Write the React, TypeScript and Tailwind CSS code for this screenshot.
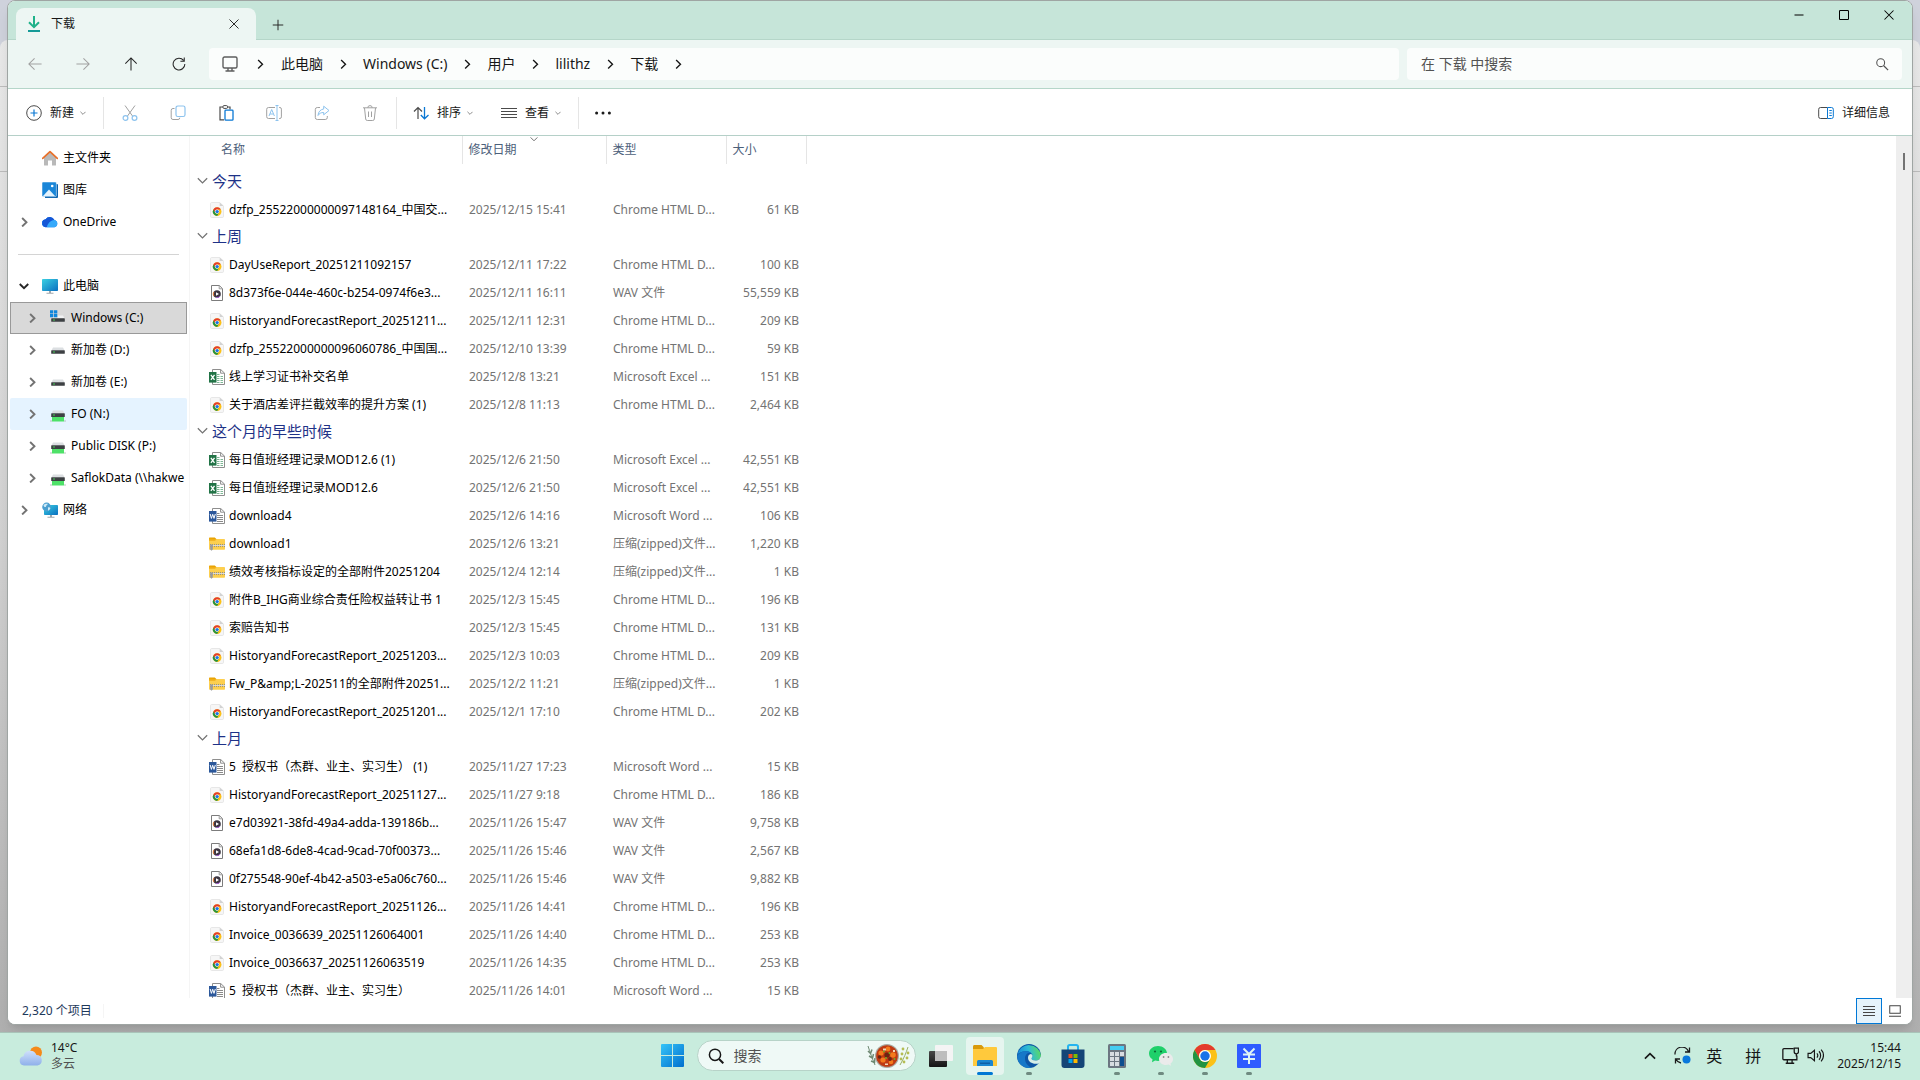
import { Fragment, type ReactNode } from "react";

type FileKind = "chrome" | "wav" | "excel" | "word" | "zip";

type FileRow = {
  kind: FileKind;
  name: string;
  date: string;
  size: string;
};

const typeLabels: Record<FileKind, string> = {
  chrome: "Chrome HTML D...",
  wav: "WAV 文件",
  excel: "Microsoft Excel ...",
  word: "Microsoft Word ...",
  zip: "压缩(zipped)文件...",
};

const groups: { title: string; files: FileRow[] }[] = [
  {
    title: "今天",
    files: [
      { kind: "chrome", name: "dzfp_25522000000097148164_中国交...", date: "2025/12/15 15:41", size: "61 KB" },
    ],
  },
  {
    title: "上周",
    files: [
      { kind: "chrome", name: "DayUseReport_20251211092157", date: "2025/12/11 17:22", size: "100 KB" },
      { kind: "wav", name: "8d373f6e-044e-460c-b254-0974f6e3...", date: "2025/12/11 16:11", size: "55,559 KB" },
      { kind: "chrome", name: "HistoryandForecastReport_20251211...", date: "2025/12/11 12:31", size: "209 KB" },
      { kind: "chrome", name: "dzfp_25522000000096060786_中国国...", date: "2025/12/10 13:39", size: "59 KB" },
      { kind: "excel", name: "线上学习证书补交名单", date: "2025/12/8 13:21", size: "151 KB" },
      { kind: "chrome", name: "关于酒店差评拦截效率的提升方案 (1)", date: "2025/12/8 11:13", size: "2,464 KB" },
    ],
  },
  {
    title: "这个月的早些时候",
    files: [
      { kind: "excel", name: "每日值班经理记录MOD12.6 (1)", date: "2025/12/6 21:50", size: "42,551 KB" },
      { kind: "excel", name: "每日值班经理记录MOD12.6", date: "2025/12/6 21:50", size: "42,551 KB" },
      { kind: "word", name: "download4", date: "2025/12/6 14:16", size: "106 KB" },
      { kind: "zip", name: "download1", date: "2025/12/6 13:21", size: "1,220 KB" },
      { kind: "zip", name: "绩效考核指标设定的全部附件20251204", date: "2025/12/4 12:14", size: "1 KB" },
      { kind: "chrome", name: "附件B_IHG商业综合责任险权益转让书 1", date: "2025/12/3 15:45", size: "196 KB" },
      { kind: "chrome", name: "索赔告知书", date: "2025/12/3 15:45", size: "131 KB" },
      { kind: "chrome", name: "HistoryandForecastReport_20251203...", date: "2025/12/3 10:03", size: "209 KB" },
      { kind: "zip", name: "Fw_P&amp;L-202511的全部附件20251...", date: "2025/12/2 11:21", size: "1 KB" },
      { kind: "chrome", name: "HistoryandForecastReport_20251201...", date: "2025/12/1 17:10", size: "202 KB" },
    ],
  },
  {
    title: "上月",
    files: [
      { kind: "word", name: "5  授权书（杰群、业主、实习生） (1)", date: "2025/11/27 17:23", size: "15 KB" },
      { kind: "chrome", name: "HistoryandForecastReport_20251127...", date: "2025/11/27 9:18", size: "186 KB" },
      { kind: "wav", name: "e7d03921-38fd-49a4-adda-139186b...", date: "2025/11/26 15:47", size: "9,758 KB" },
      { kind: "wav", name: "68efa1d8-6de8-4cad-9cad-70f00373...", date: "2025/11/26 15:46", size: "2,567 KB" },
      { kind: "wav", name: "0f275548-90ef-4b42-a503-e5a06c760...", date: "2025/11/26 15:46", size: "9,882 KB" },
      { kind: "chrome", name: "HistoryandForecastReport_20251126...", date: "2025/11/26 14:41", size: "196 KB" },
      { kind: "chrome", name: "Invoice_0036639_20251126064001", date: "2025/11/26 14:40", size: "253 KB" },
      { kind: "chrome", name: "Invoice_0036637_20251126063519", date: "2025/11/26 14:35", size: "253 KB" },
      { kind: "word", name: "5  授权书（杰群、业主、实习生）", date: "2025/11/26 14:01", size: "15 KB" },
    ],
  },
];

const crumbs = ["此电脑", "Windows (C:)", "用户", "lilithz", "下载"];

/* ---------- small line icons ---------- */

type ChevronProps = { dir: "right" | "down" | "up"; className?: string; width?: number };

function Chevron({ dir, className = "size-2", width = 1.1 }: ChevronProps) {
  const d = {
    right: "M2.5 .8 6 4.2 2.5 7.6",
    down: "M.6 2.4 4 5.8 7.4 2.4",
    up: "M.6 5.8 4 2.4 7.4 5.8",
  }[dir];
  return (
    <svg viewBox="0 0 8 8" className={`shrink-0 ${className}`} fill="none" stroke="currentColor" strokeWidth={width}>
      <path d={d} />
    </svg>
  );
}

function Line({ children, className = "size-4" }: { children: ReactNode; className?: string }) {
  return (
    <svg viewBox="0 0 16 16" className={`shrink-0 ${className}`} fill="none" stroke="currentColor" strokeWidth="1">
      {children}
    </svg>
  );
}

function ChromeMark() {
  return (
    <>
      <circle cx="12" cy="12" r="12" fill="#fbc116" />
      <path d="M1.6 6A12 12 0 0 1 22.4 6H12a6 6 0 0 0-5.2 9z" fill="#e33b2e" />
      <path d="M1.6 6A12 12 0 0 0 12 24l5.2-9A6 6 0 0 1 6.8 15z" fill="#229342" />
      <circle cx="12" cy="12" r="6" fill="#fff" />
      <circle cx="12" cy="12" r="4.7" fill="#1a73e8" />
    </>
  );
}

function FileIcon({ kind }: { kind: FileKind }) {
  if (kind === "chrome") {
    return (
      <svg viewBox="0 0 16 16" className="size-4 shrink-0">
        <path d="M2.5.5h8.2l3.8 3.6v10.2a1.2 1.2 0 0 1-1.2 1.2H2.7a1.2 1.2 0 0 1-1.2-1.2V1.7A1.2 1.2 0 0 1 2.5.5z" fill="#f6f6f6" stroke="#e2e2e2" strokeWidth=".8" />
        <path d="M10.7.5v3.6h3.8z" fill="#d2d2d2" />
        <g transform="translate(3.8 5.3) scale(.36)">
          <ChromeMark />
        </g>
      </svg>
    );
  }
  if (kind === "wav") {
    return (
      <svg viewBox="0 0 16 16" className="size-4 shrink-0">
        <path d="M2.5.5h7.8l3.2 3.2v11.8h-11z" fill="#fff" stroke="#7c7c7c" />
        <path d="M10.2.5v3.3h3.3" fill="none" stroke="#9a9a9a" />
        <circle cx="8" cy="9" r="3.8" fill="#3b3440" />
        <path d="M5 6.8a3.6 3.6 0 0 0 0 4.4" stroke="#e8833c" fill="none" />
        <path d="M11 11A3.8 3.8 0 0 1 7 12.6" stroke="#a05bd0" fill="none" />
        <path d="m7 7.2 3 1.8-3 1.8z" fill="#fff" />
      </svg>
    );
  }
  if (kind === "zip") {
    return (
      <svg viewBox="0 0 16 16" className="size-4 shrink-0">
        <path d="M0 2.4C0 1.8.4 1.4 1 1.4h4.8L7.4 3H0z" fill="#e8a200" />
        <path d="M0 3h15.2c.5 0 .8.3.8.8V13c0 .5-.3.8-.8.8H.8A.8.8 0 0 1 0 13z" fill="#fdcf4f" />
        <path d="M0 2.4v2.4h6l1.6-1.6z" fill="#f0ad14" />
        <path d="M1 8.6h15M1 10.4h15" stroke="#8b8b8b" strokeDasharray="1 1" />
        <path d="M1 9.5h15" stroke="#d9d9d9" />
        <path d="M1.2 8.4h2.6v5.2l-1.3 1.2-1.3-1.2z" fill="#9b9b9b" />
      </svg>
    );
  }
  const word = kind === "word";
  return (
    <svg viewBox="0 0 16 16" className="size-4 shrink-0">
      <path d="M3.5.5h8.2l3.8 3.6v11.4h-12z" fill="#fff" stroke="#8e8e8e" />
      <path d="M11.6.5v3.7h3.9" fill="none" stroke="#8e8e8e" />
      {word ? (
        <path d="M8 5.5h2.5M8 7.5h6M8 9.5h6M8 11.5h6M8 13.5h6" stroke="#8a8a8a" />
      ) : (
        <path d="M8 5.5h2.5M8 7.5h6M8 9.5h6M8 11.5h6M8 13.5h6" stroke="#7db795" strokeDasharray="2.5 1" />
      )}
      <path d="M0 3h7.5v10.6H0z" fill={word ? "#2b579a" : "#217346"} />
      {word ? (
        <path d="m1.2 6 1.2 4.4L3.7 6.3 5 10.4 6.3 6" fill="none" stroke="#fff" />
      ) : (
        <path d="m1.9 5.8 3.6 5M5.5 5.8l-3.6 5" fill="none" stroke="#fff" strokeWidth="1.3" />
      )}
    </svg>
  );
}

/* ---------- navigation pane ---------- */

function HomeIcon() {
  return (
    <svg viewBox="0 0 16 16" className="size-4 shrink-0">
      <path d="M2 7.2 8 1.8l6 5.4V15a.6.6 0 0 1-.6.6H10V10.4H6v5.2H2.6A.6.6 0 0 1 2 15z" fill="#b9b9b9" />
      <path d="M.7 8.4 8 1.6l7.3 6.8" fill="none" stroke="#e8702a" strokeWidth="1.7" strokeLinecap="round" strokeLinejoin="round" />
    </svg>
  );
}

function GalleryIcon() {
  return (
    <svg viewBox="0 0 16 16" className="size-4 shrink-0">
      <path d="M3 2h12a1 1 0 0 1 1 1v12a1 1 0 0 1-1 1H3z" fill="#0b62ad" />
      <rect width="14.4" height="14.6" rx="1" fill="#1a86d8" stroke="#fff" strokeWidth=".5" />
      <path d="m1 14 6-6.6L13 14z" fill="#e4f3fd" />
      <circle cx="10.2" cy="4" r="1.3" fill="#fff" />
    </svg>
  );
}

function CloudIcon() {
  return (
    <svg viewBox="0 0 16 16" className="size-4 shrink-0">
      <path d="M4 13.2a4 4 0 0 1-.4-8A5 5 0 0 1 12.4 6a3.7 3.7 0 0 1 .1 7.2z" fill="#1a7df0" />
      <path d="M3.6 5.2A5 5 0 0 1 12.4 6C9.6 6 7 8 4.8 13.1A4 4 0 0 1 3.6 5.2z" fill="#1557d6" />
      <path d="M5 13.2c.6-3.6 3.6-7 7.4-7.2a3.7 3.7 0 0 1 .1 7.2z" fill="#36a9fa" />
    </svg>
  );
}

function PcIcon() {
  return (
    <svg viewBox="0 0 16 16" className="size-4 shrink-0">
      <defs>
        <linearGradient id="screen" x1="0" y1="0" x2="1" y2="1">
          <stop offset="0" stopColor="#3ad0e2" />
          <stop offset="1" stopColor="#0b6fc0" />
        </linearGradient>
      </defs>
      <rect y="1" width="16" height="12" rx=".8" fill="url(#screen)" />
      <path d="M7 13h2v2H7zM4.500 14.800h7v.9h-7z" fill="#9ea7ad" />
    </svg>
  );
}

function NetworkIcon() {
  return (
    <svg viewBox="0 0 16 16" className="size-4 shrink-0">
      <rect x="2" y="3" width="14" height="10" rx=".8" fill="url(#screen)" />
      <path d="M8 13h2v2H8zM5.500 14.800h7v.9h-7z" fill="#9ea7ad" />
      <circle cx="4.6" cy="5" r="4.4" fill="#4b9fd0" />
      <path d="M1.5 3.2c1.5-2 3.4-1.6 4.4-1.4-.4 1.4-1.6 1.2-1.8 2.4S2.2 5.6 1.5 3.2zM6 5.6c1.2-.6 2 0 2.4.6-.6 1.6-1.6 2.2-2.4 2.4z" fill="#cfeaf6" />
    </svg>
  );
}

function NetworkDriveIcon() {
  return (
    <svg viewBox="0 0 16 16" className="size-4 shrink-0">
      <path d="M2 10h12v5.500H2z" fill="#4ee168" />
      <path d="M0 15h2M14 15h2" stroke="#a9b3ad" strokeWidth=".8" />
      <path d="M3 4.400h10l1.600 3.200H1.400z" fill="#dcdfe2" />
      <rect x="1.200" y="7.200" width="13.600" height="3.800" rx=".6" fill="#3d4043" />
      <circle cx="4" cy="9" r=".8" fill="#44e05a" />
    </svg>
  );
}

function DriveIcon({ system }: { system?: boolean }) {
  return (
    <svg viewBox="0 0 16 16" className="size-4 shrink-0">
      <path d="M3 5.400h10l1.600 3.200H1.400z" fill={system ? "#f1f2f3" : "#dcdfe2"} />
      <rect x="1.200" y="8.200" width="13.600" height="3.600" rx=".6" fill="#3d4043" />
      <circle cx="4" cy="10" r=".8" fill="#44e05a" />
      {system && (
        <>
          <path d="M0 0h7.600v7.600H0z" fill="#d9d9d9" />
          <path d="M0 .2h3.300v3.200H0zM4 .2h3.300v3.200H4zM0 4.100h3.300v3.200H0zM4 4.100h3.300v3.200H4z" fill="#0f86dc" />
        </>
      )}
    </svg>
  );
}

type NavItemProps = {
  icon: ReactNode;
  label: string;
  expand?: "right" | "down";
  nested?: boolean;
  className?: string;
};

function NavItem({ icon, label, expand, nested, className = "" }: NavItemProps) {
  return (
    <li>
      <button
        type="button"
        className={`flex h-8 w-full items-center overflow-hidden text-xs whitespace-nowrap text-black ${nested ? "pl-[17px]" : "pl-[9px]"} ${className}`}
      >
        <span className="mr-[7px] flex w-4 shrink-0">
          {expand && (
            <Chevron
              dir={expand}
              width={1.5}
              className={expand === "down" ? "size-2.5 text-neutral-800" : "size-2.5 text-neutral-500"}
            />
          )}
        </span>
        {icon}
        <span className="ml-[5px]">{label}</span>
      </button>
    </li>
  );
}

function Sidebar() {
  return (
    <nav aria-label="导航窗格" className="w-[182px] shrink-0 overflow-hidden border-r border-neutral-100 px-0.5 py-1.5">
      <ul>
        <NavItem icon={<HomeIcon />} label="主文件夹" />
        <NavItem icon={<GalleryIcon />} label="图库" />
        <NavItem icon={<CloudIcon />} label="OneDrive" expand="right" />
      </ul>
      <div className="flex h-8 items-center px-2">
        <hr className="w-full border-neutral-300" />
      </div>
      <ul>
        <NavItem icon={<PcIcon />} label="此电脑" expand="down" />
        <NavItem
          icon={<DriveIcon system />}
          label="Windows (C:)"
          expand="right"
          nested
          className="bg-[#d9d9d9] outline -outline-offset-1 outline-[#999999]"
        />
        <NavItem icon={<DriveIcon />} label="新加卷 (D:)" expand="right" nested />
        <NavItem icon={<DriveIcon />} label="新加卷 (E:)" expand="right" nested />
        <NavItem icon={<NetworkDriveIcon />} label="FO (N:)" expand="right" nested className="rounded-xs bg-[#e5f3ff]" />
        <NavItem icon={<NetworkDriveIcon />} label="Public DISK (P:)" expand="right" nested />
        <NavItem icon={<NetworkDriveIcon />} label="SaflokData (\\hakwe" expand="right" nested />
        <NavItem icon={<NetworkIcon />} label="网络" expand="right" />
      </ul>
    </nav>
  );
}

/* ---------- window chrome ---------- */

function TitleBar() {
  return (
    <div className="flex h-[39px] shrink-0 items-end border-b border-[#b5d6c9] bg-[#c6e5d9]">
      {/* tab */}
      <div className="-mb-px ml-2 flex h-8 w-60 items-center rounded-t-lg bg-[#edf6f3] pr-2.5 pl-[11px]">
        <svg viewBox="0 0 14 16" className="h-4 w-3.5" fill="none" strokeWidth="2">
          <path d="M7 0v11M2 6.200l5 5 5-5" stroke="#1fb28a" />
          <path d="M1 15h12" stroke="#159a97" />
        </svg>
        <span className="ml-2.5 grow text-xs text-neutral-900">下载</span>
        <button type="button" aria-label="关闭标签页" className="flex size-6 items-center justify-center text-neutral-800">
          <Line className="size-3">
            <path d="m2 2 12 12M14 2 2 14" strokeWidth="1.3" />
          </Line>
        </button>
      </div>
      <button type="button" aria-label="新标签页" className="mb-[2px] ml-2.5 flex size-6 items-center justify-center text-neutral-800">
        <Line className="size-3">
          <path d="M8 1v14M1 8h14" strokeWidth="1.3" />
        </Line>
      </button>
      <div className="ml-auto flex h-full items-start pr-px text-black">
        <button type="button" aria-label="最小化" className="flex h-7 w-[45px] items-center justify-center">
          <Line className="size-3">
            <path d="M2 8h12" strokeWidth="1.4" />
          </Line>
        </button>
        <button type="button" aria-label="最大化" className="flex h-7 w-[45px] items-center justify-center">
          <Line className="size-3">
            <rect x="2" y="2" width="12" height="12" rx="1" strokeWidth="1.4" />
          </Line>
        </button>
        <button type="button" aria-label="关闭" className="flex h-7 w-[45px] items-center justify-center">
          <Line className="size-3">
            <path d="m2 2 12 12M14 2 2 14" strokeWidth="1.4" />
          </Line>
        </button>
      </div>
    </div>
  );
}

function NavButton({ label, muted, children }: { label: string; muted?: boolean; children: ReactNode }) {
  return (
    <button
      type="button"
      aria-label={label}
      className={`flex size-8 items-center justify-center ${muted ? "text-neutral-400" : "text-neutral-800"}`}
    >
      <Line className="size-3.5">{children}</Line>
    </button>
  );
}

function AddressRow() {
  return (
    <div className="flex h-[49px] shrink-0 items-center border-b border-[#b5d6c9] bg-[#edf6f3] pr-2.5 pl-[11px]">
      <div className="mr-3.5 flex gap-4">
        <NavButton label="后退" muted>
          <path d="M15.500 8H1M7.500 1.500 1 8l6.500 6.500" strokeWidth="1.200" />
        </NavButton>
        <NavButton label="前进" muted>
          <path d="M.5 8H15M8.500 1.500 15 8l-6.500 6.500" strokeWidth="1.200" />
        </NavButton>
        <NavButton label="上移">
          <path d="M8 15.500V1M1.500 7.500 8 1l6.500 6.500" strokeWidth="1.200" />
        </NavButton>
        <NavButton label="刷新">
          <path d="M13.200 3.800A6.700 6.700 0 1 0 14.700 8M14 .5v4.300H9.600" strokeWidth="1.200" />
        </NavButton>
      </div>
      {/* breadcrumb */}
      <div className="flex h-8 grow items-center rounded-sm bg-[#fbfdfc] pl-3 text-sm text-neutral-900">
        <svg viewBox="0 0 18 16" className="h-4 w-[18px]" fill="none" stroke="#5d5d5d" strokeWidth="1.4">
          <rect x="2" y="1" width="14" height="11" rx="1.500" />
          <path d="M7 12v2.500M11 12v2.500M4.500 15h9" />
        </svg>
        <Chevron dir="right" className="mx-4 size-2.5" />
        {crumbs.map((crumb) => (
          <Fragment key={crumb}>
            <button type="button">{crumb}</button>
            <Chevron dir="right" className="mx-[15px] size-2.5" />
          </Fragment>
        ))}
      </div>
      {/* search */}
      <label className="ml-2 flex h-8 w-[495px] items-center rounded-sm bg-[#fbfdfc] pr-[13px] pl-3.5">
        <input
          type="text"
          aria-label="在 下载 中搜索"
          placeholder="在 下载 中搜索"
          className="grow bg-transparent text-sm text-neutral-900 outline-none placeholder:text-neutral-600"
        />
        <Line className="size-3.5 text-neutral-600">
          <circle cx="6.500" cy="6.500" r="4.500" strokeWidth="1.200" />
          <path d="m10 10 5 5" strokeWidth="1.400" />
        </Line>
      </label>
    </div>
  );
}

function ToolButton({ label, children }: { label: string; children: ReactNode }) {
  return (
    <button type="button" aria-label={label} className="flex size-8 items-center justify-center text-neutral-400">
      <Line>{children}</Line>
    </button>
  );
}

function Divider() {
  return <div className="h-8 w-px bg-neutral-200" />;
}

function CommandBar() {
  return (
    <div className="flex h-[47px] shrink-0 items-center border-b border-[#b5d0c8] bg-white pt-0.5 pr-[22px] pl-[18px] text-xs text-neutral-900">
      <button type="button" className="mr-[17px] flex items-center gap-2">
        <Line>
          <circle cx="8" cy="8" r="7.300" stroke="#4a4a4a" />
          <path d="M8 4.500v7M4.500 8h7" stroke="#0a78d4" strokeWidth="1.200" />
        </Line>
        新建
        <Chevron dir="down" className="-ml-0.5 size-1.5 text-neutral-500" />
      </button>
      <Divider />
      <div className="mx-2.5 flex gap-4">
        <ToolButton label="剪切">
          <path d="m3 .5 7.500 10.500M13 .5 5.500 11" />
          <circle cx="3.500" cy="13" r="2.400" stroke="#8dc3ee" strokeWidth="1.200" />
          <circle cx="12.500" cy="13" r="2.400" stroke="#8dc3ee" strokeWidth="1.200" />
        </ToolButton>
        <ToolButton label="复制">
          <path d="M4.500 3.500H3a1.800 1.800 0 0 0-1.800 1.800v7.400A1.800 1.800 0 0 0 3 14.500h5a1.800 1.800 0 0 0 1.800-1.800" />
          <rect x="6" y="1" width="9" height="10.500" rx="1.800" stroke="#8dc3ee" strokeWidth="1.200" />
        </ToolButton>
        <ToolButton label="粘贴">
          <path d="M6 14.800H2V2h3M9 2h3v2.500" stroke="#4a4a4a" strokeWidth="1.200" />
          <rect x="5" y=".6" width="4.500" height="2.800" rx="1" stroke="#4a4a4a" />
          <rect x="7" y="5.200" width="8" height="10" rx=".8" stroke="#0a78d4" strokeWidth="1.300" />
        </ToolButton>
        <ToolButton label="重命名">
          <path d="M9 2.500H2.500A1.800 1.800 0 0 0 .7 4.300v7.400a1.800 1.800 0 0 0 1.800 1.800H9M13 2.500h.8a1.600 1.600 0 0 1 1.600 1.600v7.800a1.600 1.600 0 0 1-1.600 1.600H13" />
          <path d="M11 .5v15M9.500.5h3M9.500 15.500h3M3 11l2.700-6.500L8.400 11M4 9h3.400" stroke="#8dc3ee" />
        </ToolButton>
        <ToolButton label="共享">
          <path d="M6 2.500H3.300A2 2 0 0 0 1.300 4.500v8a2 2 0 0 0 2 2h8a2 2 0 0 0 2-2v-1.500" />
          <path d="M9.700 1.200 15 5.500l-5.300 4.300V7.500C7 7.400 5.200 8.500 4 10.500c.3-3.700 2.300-6 5.700-6.500z" stroke="#8dc3ee" />
        </ToolButton>
        <ToolButton label="删除">
          <path d="M1 2.800h14M5.800 2.800a2.200 2.200 0 0 1 4.400 0M2.500 3l1.200 11a1.600 1.600 0 0 0 1.600 1.500h5.400a1.600 1.600 0 0 0 1.600-1.500l1.200-11M6.500 6.500v5.500M9.500 6.500v5.500" />
        </ToolButton>
      </div>
      <Divider />
      <button type="button" className="ml-4 flex items-center gap-2">
        <Line>
          <path d="M5 14V2.500M1 6.500l4-4 4 4" stroke="#4a4a4a" strokeWidth="1.200" />
          <path d="M11.500 2v11.500M7.800 10l3.700 3.800 4-3.800" stroke="#0a78d4" strokeWidth="1.300" />
        </Line>
        排序
        <Chevron dir="down" className="-ml-0.5 size-1.5 text-neutral-500" />
      </button>
      <button type="button" className="mr-[17px] ml-7 flex items-center gap-2">
        <Line>
          <path d="M0 3.500h16M0 6.500h16M0 9.500h16M0 12.500h16" stroke="#4a4a4a" />
        </Line>
        查看
        <Chevron dir="down" className="-ml-0.5 size-1.5 text-neutral-500" />
      </button>
      <Divider />
      <button type="button" aria-label="更多" className="ml-2 flex size-8 items-center justify-center">
        <svg viewBox="0 0 16 4" className="h-1 w-4" fill="#1a1a1a">
          <circle cx="1.600" cy="2" r="1.500" />
          <circle cx="8" cy="2" r="1.500" />
          <circle cx="14.400" cy="2" r="1.500" />
        </svg>
      </button>
      <button type="button" className="ml-auto flex items-center gap-2">
        <Line>
          <path d="M9.500 2.500H2.500A1.800 1.800 0 0 0 .7 4.300v7.400a1.800 1.800 0 0 0 1.800 1.800h7" stroke="#4a4a4a" />
          <path d="M9.500 2.500h4a1.800 1.800 0 0 1 1.800 1.800v7.400a1.800 1.800 0 0 1-1.800 1.800h-4zM11.300 5.500h2.500M11.300 8h2.500M11.300 10.500h2.500" stroke="#0a78d4" />
        </Line>
        详细信息
      </button>
    </div>
  );
}

function FileTable() {
  return (
    <div className="relative min-w-0 grow overflow-hidden">
      <Chevron dir="down" className="absolute -top-px left-[340px] size-2 text-neutral-500" width={1} />
      <table className="w-[616px] table-fixed border-collapse text-xs whitespace-nowrap text-neutral-500">
        <colgroup>
          <col className="w-[272px]" />
          <col className="w-36" />
          <col className="w-[120px]" />
          <col className="w-20" />
        </colgroup>
        <thead>
          <tr className="h-7 text-left text-[#4c607a]">
            <th scope="col" className="border-r border-neutral-200 pl-[31px] font-normal">名称</th>
            <th scope="col" className="border-r border-neutral-200 pl-1.5 font-normal">修改日期</th>
            <th scope="col" className="border-r border-neutral-200 pl-1.5 font-normal">类型</th>
            <th scope="col" className="border-r border-neutral-200 pl-1.5 font-normal">大小</th>
          </tr>
          <tr className="h-[5px]" />
        </thead>
        {groups.map((group) => (
          <tbody key={group.title}>
            <tr className="h-[27px]">
              <th colSpan={4} scope="rowgroup" className="p-0 pb-1 pl-[7px] text-left font-normal">
                <button type="button" className="flex items-center gap-1 text-[15px] leading-5 text-[#1e3287]">
                  <Chevron dir="down" className="size-[11px] text-neutral-500" width={0.9} />
                  {group.title}
                </button>
              </th>
            </tr>
            {group.files.map((file) => (
              <tr key={file.name} className="h-7">
                <td className="p-0 pl-[19px]">
                  <div className="flex items-center gap-1 whitespace-pre text-black">
                    <FileIcon kind={file.kind} />
                    {file.name}
                  </div>
                </td>
                <td className="p-0 pl-[7px]">{file.date}</td>
                <td className="p-0 pl-[7px]">{typeLabels[file.kind]}</td>
                <td className="p-0 pr-[7px] text-right">{file.size}</td>
              </tr>
            ))}
          </tbody>
        ))}
      </table>
    </div>
  );
}

function StatusBar() {
  return (
    <div className="flex h-[26px] shrink-0 items-center bg-white pr-[11px] pl-3.5 text-xs text-[#1e395b]">
      <span className="w-[81px]">2,320 个项目</span>
      <div className="h-3.5 w-px bg-neutral-100" />
      <button
        type="button"
        aria-label="详细信息视图"
        className="ml-auto flex size-[26px] items-center justify-center border border-[#0078d7] bg-[#e5f3fb] text-neutral-700"
      >
        <Line className="size-3">
          <path d="M0 2h16M0 6h16M0 10h16M0 14h16" strokeWidth="1.300" />
        </Line>
      </button>
      <button type="button" aria-label="大缩略图视图" className="ml-[7px] flex items-center justify-center text-neutral-700">
        <Line className="size-3">
          <rect x="1" y="1" width="14" height="10" strokeWidth="1.300" />
          <path d="M0 15h16" strokeWidth="1.300" />
        </Line>
      </button>
    </div>
  );
}

/* ---------- taskbar ---------- */

function TaskApp({ label, state, children }: { label: string; state?: "running" | "active"; children: ReactNode }) {
  return (
    <button
      type="button"
      aria-label={label}
      className={`relative flex h-[38px] w-[38px] items-center justify-center rounded-sm ${state === "active" ? "bg-[#e6f5ef]" : ""}`}
    >
      <svg viewBox="0 0 24 24" className="size-6">
        {children}
      </svg>
      {state === "running" && <span className="absolute bottom-0 h-[3px] w-1.5 rounded-full bg-[#6f8a80]" />}
      {state === "active" && <span className="absolute bottom-0 h-[3px] w-4 rounded-full bg-[#0078d4]" />}
    </button>
  );
}

function FoodArt() {
  return (
    <svg viewBox="0 0 44 24" className="h-6 w-11 shrink-0">
      <path d="M2 2c2 6 4 12 7 19" stroke="#6f8a73" fill="none" />
      <path d="m2 7 2.500 2.500L6 5.500M3 12l3.500 2 1-4M5 17l3.500 1.500L9 14" stroke="#6f8a73" strokeWidth="1.500" fill="none" />
      <circle cx="21" cy="12" r="12" fill="#a9aaa2" />
      <circle cx="21" cy="12" r="10.800" fill="#bf3a12" />
      <g fill="#f47a1c">
        <circle cx="15" cy="9" r="2.600" />
        <circle cx="22" cy="5" r="2.400" />
        <circle cx="27" cy="11" r="2.800" />
        <circle cx="17" cy="16" r="2.600" />
        <circle cx="25" cy="18" r="2.300" />
      </g>
      <g fill="#6b2413">
        <circle cx="21" cy="11" r="2.600" />
        <circle cx="24" cy="15" r="1.900" />
        <circle cx="13.500" cy="13" r="1.800" />
      </g>
      <path d="M17 4.500h3v2h-3zM27 6h2v2h-2zM19 19.500h3v1.500h-3z" fill="#f2d6b8" />
      <g fill="#6fae2b">
        <circle cx="18" cy="7.500" r="1" />
        <circle cx="23.500" cy="9" r="1" />
        <circle cx="20" cy="14" r="1" />
        <circle cx="28.500" cy="15" r="1" />
      </g>
      <path d="M42 3c-2 6-4 11-8 18" stroke="#9ab06a" fill="none" />
      <g fill="#b5bd52">
        <circle cx="37" cy="5" r="1.400" />
        <circle cx="42" cy="9" r="1.400" />
        <circle cx="36" cy="10" r="1.400" />
        <circle cx="41" cy="14" r="1.400" />
        <circle cx="35" cy="15" r="1.400" />
        <circle cx="38" cy="18" r="1.400" />
      </g>
    </svg>
  );
}

function Taskbar() {
  return (
    <footer className="relative grid h-12 shrink-0 grid-cols-[1fr_auto_1fr] items-center border-t border-[#a9c4b9] bg-[#c8ecdd] pb-0.5 text-xs text-neutral-900">
      {/* weather */}
      <button type="button" className="ml-[19px] flex items-center gap-2 justify-self-start text-left">
        <svg viewBox="0 0 24 20" className="h-5 w-6">
          <defs>
            <linearGradient id="cloud" x1="0" y1="0" x2="0" y2="1">
              <stop offset="0" stopColor="#cfe0fb" />
              <stop offset="1" stopColor="#8fb0ea" />
            </linearGradient>
          </defs>
          <circle cx="17" cy="6.500" r="6" fill="#f58a1a" />
          <path d="M5 19.500a4.700 4.700 0 0 1-.5-9.300A6.800 6.800 0 0 1 17.500 9a5.300 5.300 0 0 1 1 10.500z" fill="url(#cloud)" />
        </svg>
        <span>
          <span className="block leading-4">14°C</span>
          <span className="block leading-4 text-neutral-600">多云</span>
        </span>
      </button>

      {/* pinned apps */}
      <div className="flex items-center gap-1.5 pl-2">
        <button type="button" aria-label="开始" className="mr-[7px] flex h-[38px] items-center">
          <svg viewBox="0 0 23 23" className="size-[23px]">
            <defs>
              <linearGradient id="start" x1="0" y1="0" x2="1" y2="1">
                <stop offset="0" stopColor="#35c4f8" />
                <stop offset="1" stopColor="#006fce" />
              </linearGradient>
            </defs>
            <path d="M1 0h10v11H0V1a1 1 0 0 1 1-1zM12 0h10a1 1 0 0 1 1 1v10H12zM0 12h11v11H1a1 1 0 0 1-1-1zM12 12h11v10a1 1 0 0 1-1 1H12z" fill="url(#start)" />
          </svg>
        </button>
        <label className="flex h-[31px] w-[219px] items-center rounded-full border border-[#b7d3c8] bg-[#eff9f6] pr-[5px] pl-2.5">
          <Line>
            <circle cx="7" cy="6.800" r="5.600" strokeWidth="1.500" />
            <path d="m11 11 4.300 4.300" strokeWidth="2" />
          </Line>
          <input
            type="text"
            aria-label="搜索"
            placeholder="搜索"
            className="ml-2.5 min-w-0 grow bg-transparent text-sm outline-none placeholder:text-neutral-600"
          />
          <FoodArt />
        </label>
        <TaskApp label="任务视图">
          <defs>
            <linearGradient id="view" x1="0" y1="0" x2="0" y2="1">
              <stop offset="0" stopColor="#484848" />
              <stop offset="1" stopColor="#141414" />
            </linearGradient>
          </defs>
          <rect y="7" width="18" height="16" rx="1" fill="url(#view)" />
          <rect x="6" y="1" width="18" height="16" rx="1" fill="#f4f4f4" />
          <path d="M6 7h12v10H6z" fill="#bdbdbd" />
        </TaskApp>
        <TaskApp label="文件资源管理器" state="active">
          <path d="M0 2.500C0 1.700.6 1 1.500 1h7L11 3.500V8H0z" fill="#d99a0b" />
          <path d="M0 5h10l2-2h11a1 1 0 0 1 1 1v18H0z" fill="#ffc93c" />
          <path d="M4 22v-4.500a1.500 1.500 0 0 1 1.500-1.500h13a1.500 1.500 0 0 1 1.500 1.500V22z" fill="#1a86d0" />
          <path d="M7 18.500h10v1.500H7z" fill="#0d5fa6" />
        </TaskApp>
        <TaskApp label="Edge" state="running">
          <defs>
            <linearGradient id="edge" x1="0" y1=".5" x2="1" y2=".3">
              <stop offset="0" stopColor="#1688d8" />
              <stop offset=".5" stopColor="#2fbcd4" />
              <stop offset="1" stopColor="#5fdc58" />
            </linearGradient>
          </defs>
          <circle cx="12" cy="12" r="12" fill="#0d56a6" />
          <path d="M.3 11A12 12 0 0 1 24 11.500c0 3-2.500 5-5.500 5-2.500 0-4-1-4-2 0-.8 1-1 1-2.800C15.500 9 12.500 7.200 9 7.200 4.500 7.200 1.500 9 .3 11z" fill="url(#edge)" />
          <path d="M.1 12.500C1.500 9.300 5 7.300 9 7.300c2 0 3.500.5 4.600 1.300C10 8.800 8 11.300 8 14.500c0 4 2.500 7.500 6.500 9.200A12 12 0 0 1 .1 12.500z" fill="#1678c8" />
          <path d="M13.800 10c-1.800.4-2.800 2-2.800 3.800 0 3.700 3.700 6 7.500 6 1.500 0 3-.4 4-.9L24 16v-4l-1.500 3.200c-1.200.9-2.500 1.300-4 1.300-2.500 0-4-1-4-2 0-.8 1-1 1-2.800 0-.8-.6-1.400-1.700-1.700z" fill="#d5eee8" />
        </TaskApp>
        <TaskApp label="应用商店">
          <path d="M7 6V2.800C7 1.800 7.600 1 8.800 1h6.400C16.400 1 17 1.800 17 2.800V6" fill="none" stroke="#25b4ef" strokeWidth="2" />
          <path d="M.5 5.500h23V21a3 3 0 0 1-3 3h-17a3 3 0 0 1-3-3z" fill="#154577" />
          <path d="M7.500 10h4v4h-4z" fill="#f25022" />
          <path d="M12.500 10h4v4h-4z" fill="#7fba00" />
          <path d="M7.500 15h4v4h-4z" fill="#00a4ef" />
          <path d="M12.500 15h4v4h-4z" fill="#ffb900" />
        </TaskApp>
        <TaskApp label="计算器" state="running">
          <rect x="3" width="18" height="24" rx="1.500" fill="#6c7681" />
          <path d="M5 2h14v4H5z" fill="#45cdf2" />
          <path d="M5 8h4v4H5zM10 8h4v4h-4zM15 8h4v4h-4zM5 13h4v4H5zM10 13h4v4h-4zM5 18h4v4H5zM10 18h4v4h-4z" fill="#d7dce1" />
          <path d="M15 13h4v9h-4z" fill="#0d4e8f" />
        </TaskApp>
        <TaskApp label="微信" state="running">
          <path d="M9 2c5 0 9 3.300 9 7.500S14 17 9 17c-1 0-2-.1-2.900-.4L3 18.300l.5-3A7 7 0 0 1 0 9.500C0 5.300 4 2 9 2z" fill="#1fd06a" />
          <circle cx="6" cy="7.500" r="1.100" fill="#0c6b35" />
          <circle cx="12" cy="7.500" r="1.100" fill="#0c6b35" />
          <path d="M17 9c4 0 7 2.700 7 6 0 2-1 3.500-2.500 4.600l.5 2.200-2.500-1.200c-.8.300-1.600.4-2.500.4-4 0-7-2.700-7-6s3-6 7-6z" fill="#ebebeb" />
          <circle cx="14.600" cy="13" r=".9" fill="#8b8b8b" />
          <circle cx="19.400" cy="13" r=".9" fill="#8b8b8b" />
        </TaskApp>
        <TaskApp label="Chrome" state="running">
          <ChromeMark />
        </TaskApp>
        <TaskApp label="发票客户端" state="running">
          <rect width="24" height="24" rx="1" fill="#2f5bff" />
          <path d="m6.500 4.500 5.500 5.500 5.500-5.500M12 10v10M6 10.500h12M6 15h12" fill="none" stroke="#dff3f5" strokeWidth="2" />
        </TaskApp>
      </div>

      {/* tray */}
      <div className="mr-[19px] flex items-center justify-self-end">
        <button type="button" aria-label="显示隐藏的图标" className="mr-[18px]">
          <Chevron dir="up" className="size-3" width={1.1} />
        </button>
        <button type="button" aria-label="同步" className="mr-[15px]">
          <svg viewBox="0 0 17 17" className="size-[17px]" fill="none" stroke="#1a1a1a" strokeWidth="1.300">
            <path d="M1 7.500A7 7 0 0 1 14.500 4.500M15.500.5v4.500H11M1.500 16.500V12H6M2 12.500a7 7 0 0 0 5 3.500" />
            <circle cx="12.500" cy="12.500" r="4" fill="#0a78dc" stroke="none" />
          </svg>
        </button>
        <button type="button" className="mr-[23px] text-base">英</button>
        <button type="button" className="mr-[21px] text-base">拼</button>
        <button type="button" aria-label="网络和音量" className="mr-[13px] flex items-center gap-2">
          <Line className="size-[17px]">
            <path d="M11 1.500H1.800a1 1 0 0 0-1 1V11a1 1 0 0 0 1 1H14V8M5 12v3M9.500 12v3M3.500 15.300h8" strokeWidth="1.200" />
            <path d="M11.500 1h4v3.500a2 2 0 0 1-4 0zM13.500 6.500V9" strokeWidth="1.200" />
          </Line>
          <Line className="size-[17px]">
            <path d="M1 6v4h2.500L7 13V3L3.500 6zM9.300 6a3 3 0 0 1 0 4M11.300 4a6 6 0 0 1 0 8M13.300 2.500a8 8 0 0 1 0 11" strokeWidth="1.100" />
          </Line>
        </button>
        <button type="button" className="text-right">
          <span className="block leading-4">15:44</span>
          <span className="block leading-4">2025/12/15</span>
        </button>
      </div>
    </footer>
  );
}

function App() {
  return (
    <div className="flex h-screen flex-col overflow-hidden bg-[#cfd2dc] font-['Noto_Sans','Noto_Sans_CJK_SC',sans-serif]">
      <div className="relative flex min-h-0 grow flex-col px-[7px] pb-[7px]">
        {/* window behind */}
        <div className="absolute inset-x-0 top-10 bottom-0 rounded-t-lg bg-linear-to-b from-[#e9e9e9] via-[#d2d2d2] to-[#b0b0b0]">
          <div className="mt-[46px] h-px bg-neutral-400/60" />
          <div className="mt-[84px] h-px bg-neutral-400/60" />
        </div>

        {/* explorer window */}
        <main className="relative flex min-h-0 grow flex-col overflow-hidden rounded-lg border border-[#9fa5a3] bg-white shadow-lg">
          <TitleBar />
          <AddressRow />
          <CommandBar />
          <div className="flex min-h-0 grow">
            <Sidebar />
            <FileTable />
            <div className="w-4 shrink-0 bg-[#eeeeee] pt-[17px] pl-[7px]">
              <div className="h-[17px] w-0.5 bg-neutral-500" />
            </div>
          </div>
          <StatusBar />
        </main>
      </div>
      <Taskbar />
    </div>
  );
}

export default App;
